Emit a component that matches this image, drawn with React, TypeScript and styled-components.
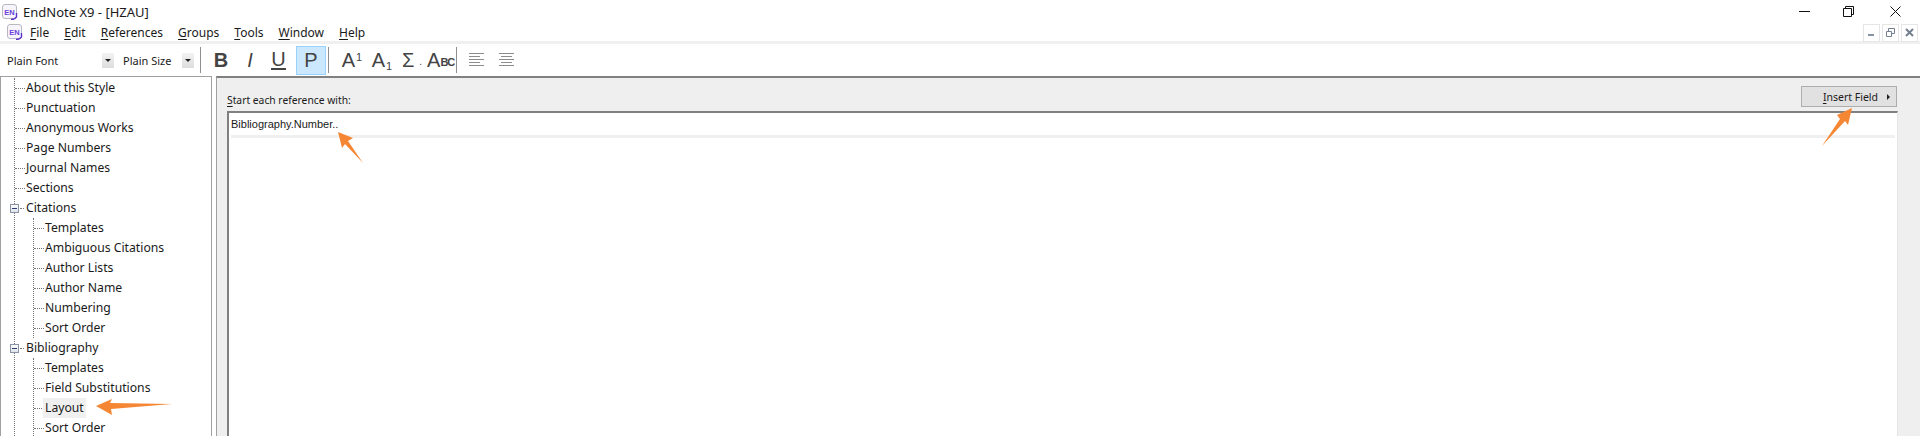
import { createGlobalStyle } from "styled-components";
import styled from "styled-components";

const GlobalStyle = createGlobalStyle`
  html, body {
    margin: 0;
    padding: 0;
    background: #fff;
    overflow: hidden;
  }
  body {
    font-family: "Noto Sans", "Open Sans", "Liberation Sans", sans-serif;
    font-size: 12px;
    color: #1a1a1a;
  }
  u { text-underline-offset: 2px; text-decoration-thickness: 1px; }
`;

const Win = styled.div`
  position: relative;
  width: 1920px;
  height: 436px;
  overflow: hidden;
  display: flex;
  flex-direction: column;
`;

const TitleBar = styled.div`
  height: 23px;
  display: flex;
  align-items: center;
  padding: 0 0 0 2px;
  gap: 5px;
  font-size: 13px;
`;

const TitleText = styled.div`
  flex: 1;
`;

const WinControls = styled.div`
  display: flex;
  align-items: center;
  margin-right: 19px;
  gap: 33px;
  svg:last-child {
    margin-left: 3px;
  }
`;

const MenuBar = styled.div`
  height: 18px;
  display: flex;
  align-items: center;
  padding-left: 7px;
  border-bottom: 3px solid #f0f0f0;
`;

const MenuIconSlot = styled.span`
  display: flex;
  margin-right: 7px;
`;

const MenuItem = styled.span`
  margin-right: 15px;
  font-size: 12px;
`;

const MenuSpacer = styled.div`
  flex: 1;
`;

const MdiButtons = styled.div`
  display: flex;
  gap: 2px;
  margin-right: 2px;
  margin-top: 1px;
`;

const MdiButton = styled.div`
  width: 15px;
  height: 16px;
  border: 1px solid #e6e6e6;
  display: flex;
  align-items: center;
  justify-content: center;
`;

const Toolbar = styled.div`
  height: 32px;
  display: flex;
  align-items: center;
  font-size: 11px;
`;

const FontLabel = styled.span<{ $w: number; $pl: number }>`
  width: ${(p) => p.$w}px;
  padding-left: ${(p) => p.$pl}px;
  box-sizing: border-box;
`;

const DropButton = styled.div`
  width: 12px;
  height: 15px;
  background: linear-gradient(#f3f3f3, #dcdcdc);
  display: flex;
  align-items: center;
  justify-content: center;
  &::after {
    content: "";
    border-left: 3px solid transparent;
    border-right: 3px solid transparent;
    border-top: 3px solid #222;
  }
`;

const ToolSep = styled.div<{ $ml: number }>`
  width: 1px;
  height: 26px;
  background: #8f8f8f;
  margin-left: ${(p) => p.$ml}px;
`;

const ToolButton = styled.div<{ $w: number; $ml?: number; $active?: boolean }>`
  width: ${(p) => p.$w}px;
  margin-left: ${(p) => p.$ml ?? 0}px;
  height: 29px;
  box-sizing: border-box;
  display: flex;
  align-items: center;
  justify-content: center;
  color: #444;
  font-family: "Liberation Sans", sans-serif;
  font-size: 20px;
  background: ${(p) => (p.$active ? "#cce8ff" : "transparent")};
  border: 1px solid ${(p) => (p.$active ? "#99d1ff" : "transparent")};
`;

const Glyph = styled.span<{ $bold?: boolean; $italic?: boolean; $under?: boolean }>`
  font-weight: ${(p) => (p.$bold ? 700 : 400)};
  font-style: ${(p) => (p.$italic ? "italic" : "normal")};
  border-bottom: ${(p) => (p.$under ? "2px solid #444" : "none")};
  line-height: ${(p) => (p.$under ? "18px" : "normal")};
`;

const Sup = styled.span`
  font-size: 11px;
  align-self: flex-start;
  margin-top: 4px;
  margin-left: 1px;
`;

const Sub = styled.span`
  font-size: 11px;
  align-self: flex-end;
  margin-bottom: 2px;
  margin-left: 1px;
`;

const SmallCaps = styled.span`
  font-size: 11px;
  font-weight: 700;
  letter-spacing: -1.2px;
  align-self: flex-end;
  margin-bottom: 6px;
`;

const Dot = styled.span`
  font-size: 10px;
  align-self: flex-end;
  margin: 0 0 7px 5px;
`;

const Body = styled.div`
  flex: 1;
  display: flex;
  min-height: 0;
`;

const TreePanel = styled.div`
  width: 212px;
  box-sizing: border-box;
  border: 1px solid #a0a0a0;
  border-bottom: none;
  padding-top: 1px;
  margin-right: 4px;
  overflow: hidden;
  flex: none;
  font-size: 12.2px;
`;

const TreeGroup = styled.div`
  margin-left: 13px;
  border-left: 1px dotted #777;
`;

const Nested = styled(TreeGroup)`
  margin-left: 18px;
`;

const Row = styled.div`
  height: 20px;
  display: flex;
  align-items: center;
  white-space: nowrap;
`;

const Dots = styled.span`
  width: 10px;
  border-top: 1px dotted #777;
  margin-right: 1px;
  flex: none;
`;

const RowLabel = styled.span<{ $selected?: boolean }>`
  padding: 0 2px 0 ${(p) => (p.$selected ? 2 : 0)}px;
  margin-left: ${(p) => (p.$selected ? -2 : 0)}px;
  line-height: 20px;
  background: ${(p) => (p.$selected ? "#f0f0f0" : "transparent")};
`;

const ExpandBox = styled.span`
  width: 7px;
  height: 7px;
  margin-left: -5px;
  flex: none;
  border: 1px solid #8a94a6;
  background: linear-gradient(#fff, #dfe3ea);
  display: flex;
  align-items: center;
  justify-content: center;
  &::after {
    content: "";
    width: 5px;
    height: 1px;
    background: #2c3e70;
  }
`;

const ShortDots = styled(Dots)`
  width: 4px;
  margin-left: 1px;
  margin-right: 2px;
`;

const Editor = styled.div`
  flex: 1;
  display: flex;
  flex-direction: column;
  border-top: 2px solid #808080;
  border-left: 1px solid #a0a0a0;
  background: #efefef;
`;

const EditorHead = styled.div`
  height: 33px;
  display: flex;
  align-items: flex-start;
  justify-content: space-between;
  padding: 0 23px 0 10px;
`;

const FieldLabel = styled.label`
  font-size: 10.3px;
  margin-top: 13px;
  line-height: 18px;
`;

const InsertButton = styled.div`
  width: 96px;
  height: 21px;
  margin-top: 8px;
  box-sizing: border-box;
  border: 1px solid #adadad;
  background: #e1e1e1;
  display: flex;
  align-items: center;
  justify-content: flex-end;
  padding-right: 6px;
  gap: 9px;
  font-size: 10.5px;
`;

const ButtonArrow = styled.span`
  border-top: 3px solid transparent;
  border-bottom: 3px solid transparent;
  border-left: 3px solid #222;
`;

const FieldWrap = styled.div`
  flex: 1;
  margin: 0 22px 0 10px;
  border-top: 2px solid #808080;
  border-left: 2px solid #808080;
  border-right: 1px solid #e6e6e6;
  background: #fff;
  padding: 2px 2px 0;
`;

const FieldLine = styled.div`
  height: 20px;
  border-bottom: 3px solid #f0f0f0;
  line-height: 19px;
  font-family: "Liberation Sans", sans-serif;
  font-size: 11px;
`;

const Overlay = styled.svg`
  position: absolute;
  left: 0;
  top: 0;
  pointer-events: none;
`;

const AppIcon = ({ size = 16 }: { size?: number }) => (
  <svg width={size} height={size} viewBox="0 0 16 16">
    <rect x="0.5" y="0.5" width="14" height="14" rx="2.5" fill="#f7f5fb" stroke="#b9b9c4" />
    <text x="7.5" y="10.5" fontSize="7.5" fontWeight="700" textAnchor="middle" fill="#6a3fd8" fontFamily="Liberation Sans">EN</text>
    <path d="M14.5 9 L14.5 13 Q13 15.5 9 15.5" stroke="#5b2fc9" strokeWidth="1.4" fill="none" />
  </svg>
);

const Lines = ({ center }: { center?: boolean }) => (
  <svg width="16" height="14" viewBox="0 0 16 14" stroke="#8c8c8c">
    <path d={center ? "M0 .5h15M2 3.5h11M0 6.5h15M2 9.5h11M0 12.5h15" : "M0 .5h15M0 3.5h11M0 6.5h15M0 9.5h11M0 12.5h15"} />
  </svg>
);

const flat = ["About this Style", "Punctuation", "Anonymous Works", "Page Numbers", "Journal Names", "Sections"];
const citations = ["Templates", "Ambiguous Citations", "Author Lists", "Author Name", "Numbering", "Sort Order"];
const biblio = ["Templates", "Field Substitutions", "Layout", "Sort Order"];

const Leaf = ({ label, selected }: { label: string; selected?: boolean }) => (
  <Row>
    <Dots />
    <RowLabel $selected={selected}>{label}</RowLabel>
  </Row>
);

const Branch = ({ label }: { label: string }) => (
  <Row>
    <ExpandBox />
    <ShortDots />
    <RowLabel>{label}</RowLabel>
  </Row>
);

export default function App() {
  const menus: [string, string][] = [
    ["F", "ile"],
    ["E", "dit"],
    ["R", "eferences"],
    ["G", "roups"],
    ["T", "ools"],
    ["W", "indow"],
    ["H", "elp"],
  ];

  return (
    <Win>
      <GlobalStyle />
      <TitleBar>
        <AppIcon />
        <TitleText>EndNote X9 - [HZAU]</TitleText>
        <WinControls>
          <svg width="11" height="11" viewBox="0 0 11 11" stroke="#111"><path d="M0 5.5h11" /></svg>
          <svg width="11" height="11" viewBox="0 0 11 11" stroke="#111" fill="none"><path d="M.5 2.5h8v8h-8zM2.5 2.5v-2h8v8h-2" /></svg>
          <svg width="11" height="11" viewBox="0 0 11 11" stroke="#111"><path d="M.5.5l10 10M10.5.5l-10 10" /></svg>
        </WinControls>
      </TitleBar>
      <MenuBar>
        <MenuIconSlot><AppIcon size={16} /></MenuIconSlot>
        {menus.map(([k, rest]) => (
          <MenuItem key={k}><u>{k}</u>{rest}</MenuItem>
        ))}
        <MenuSpacer />
        <MdiButtons>
          <MdiButton>
            <svg width="9" height="9" viewBox="0 0 9 9" fill="#8593a3"><rect x="1" y="6" width="6" height="2" /></svg>
          </MdiButton>
          <MdiButton>
            <svg width="9" height="9" viewBox="0 0 9 9" fill="none" stroke="#74808f"><path d="M.5 3.5h5v5h-5zM2.5 3V.5h6v5H6" /></svg>
          </MdiButton>
          <MdiButton>
            <svg width="9" height="9" viewBox="0 0 9 9" stroke="#74808f" strokeWidth="2"><path d="M1 1l7 7M8 1l-7 7" /></svg>
          </MdiButton>
        </MdiButtons>
      </MenuBar>
      <Toolbar>
        <FontLabel $w={102} $pl={7}>Plain Font</FontLabel>
        <DropButton />
        <FontLabel $w={68} $pl={9}>Plain Size</FontLabel>
        <DropButton />
        <ToolSep $ml={6} />
        <ToolButton $w={36} $ml={2}><Glyph $bold>B</Glyph></ToolButton>
        <ToolButton $w={22}><Glyph $italic>I</Glyph></ToolButton>
        <ToolButton $w={35}><Glyph $under>U</Glyph></ToolButton>
        <ToolButton $w={30} $active><Glyph>P</Glyph></ToolButton>
        <ToolSep $ml={2} />
        <ToolButton $w={30} $ml={8}><Glyph>A</Glyph><Sup>1</Sup></ToolButton>
        <ToolButton $w={30}><Glyph>A</Glyph><Sub>1</Sub></ToolButton>
        <ToolButton $w={30}><Glyph>Σ</Glyph><Dot>.</Dot></ToolButton>
        <ToolButton $w={27}><Glyph>A</Glyph><SmallCaps>BC</SmallCaps></ToolButton>
        <ToolSep $ml={2} />
        <ToolButton $w={30} $ml={5}><Lines /></ToolButton>
        <ToolButton $w={30}><Lines center /></ToolButton>
      </Toolbar>
      <Body>
        <TreePanel>
          <TreeGroup>
            {flat.map((t) => <Leaf key={t} label={t} />)}
            <Branch label="Citations" />
            <Nested>
              {citations.map((t) => <Leaf key={t} label={t} />)}
            </Nested>
            <Branch label="Bibliography" />
            <Nested>
              {biblio.map((t) => <Leaf key={t} label={t} selected={t === "Layout"} />)}
            </Nested>
          </TreeGroup>
        </TreePanel>
        <Editor>
          <EditorHead>
            <FieldLabel><u>S</u>tart each reference with:</FieldLabel>
            <InsertButton><span><u>I</u>nsert Field</span><ButtonArrow /></InsertButton>
          </EditorHead>
          <FieldWrap>
            <FieldLine>Bibliography.Number..</FieldLine>
          </FieldWrap>
        </Editor>
      </Body>
      <Overlay width="1920" height="436" fill="#f58634">
        <polygon points="96,406 112,399 110,403 172,404 111,409 112,415" />
        <polygon points="338,132 353,138 348,141 363,163 345,144 342,148" />
        <polygon points="1852,108 1848,125 1845,121 1822,146 1840,119 1837,115" />
      </Overlay>
    </Win>
  );
}
